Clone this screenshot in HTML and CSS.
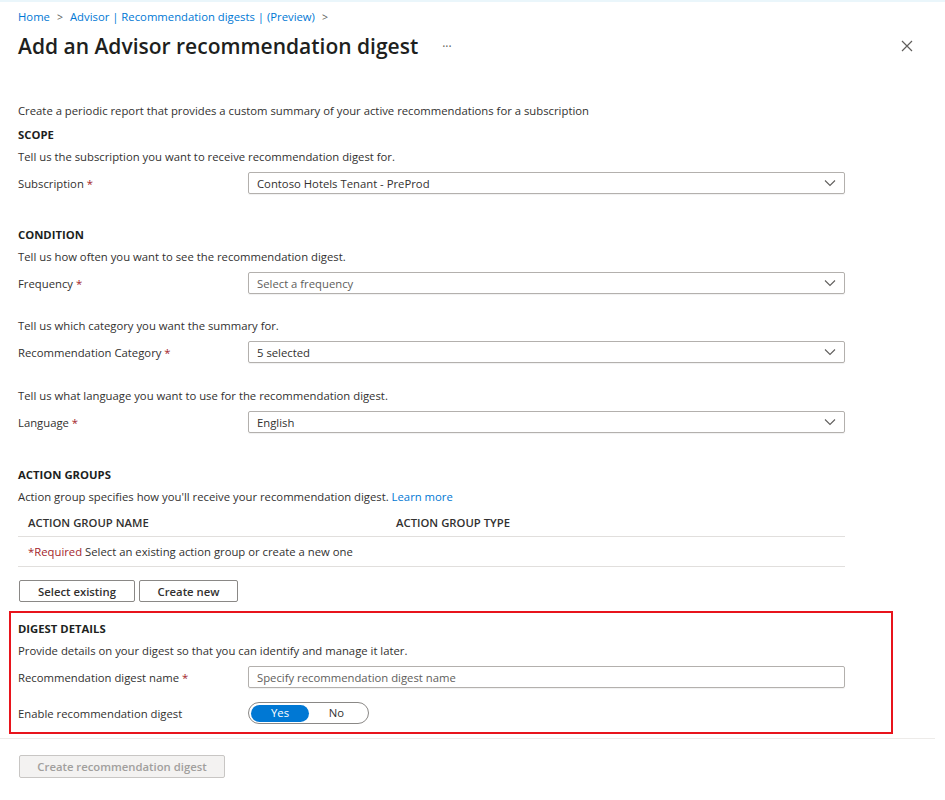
FILE: index.html
```html
<!DOCTYPE html>
<html lang="en">
<head>
<meta charset="utf-8">
<title>Add an Advisor recommendation digest</title>
<link rel="stylesheet" href="styles.css">
</head>
<body>
<div class="page">
  <nav class="breadcrumb">
    <a href="#">Home</a><span class="sep">&gt;</span><a href="#">Advisor | Recommendation digests | (Preview)</a><span class="sep">&gt;</span>
  </nav>
  <header class="titlebar">
    <h1 class="title">Add an Advisor recommendation digest</h1>
    <span class="more">···</span>
    <svg class="close" width="12" height="12" viewBox="0 0 12 12"><path d="M1 1L11 11M11 1L1 11" stroke="#605e5c" stroke-width="1.2" fill="none"/></svg>
  </header>

  <main class="form">
    <p class="text intro">Create a periodic report that provides a custom summary of your active recommendations for a subscription</p>

    <h2 class="heading">SCOPE</h2>
    <p class="text">Tell us the subscription you want to receive recommendation digest for.</p>
    <div class="row">
      <label class="label">Subscription <span class="req">*</span></label>
      <div class="select"><span class="value">Contoso Hotels Tenant - PreProd</span><svg class="chev" width="12" height="8" viewBox="0 0 12 8"><path d="M1 1.5L6 6.5L11 1.5" stroke="#605e5c" stroke-width="1.1" fill="none"/></svg></div>
    </div>

    <h2 class="heading section-gap">CONDITION</h2>
    <p class="text">Tell us how often you want to see the recommendation digest.</p>
    <div class="row">
      <label class="label">Frequency <span class="req">*</span></label>
      <div class="select"><span class="value placeholder">Select a frequency</span><svg class="chev" width="12" height="8" viewBox="0 0 12 8"><path d="M1 1.5L6 6.5L11 1.5" stroke="#605e5c" stroke-width="1.1" fill="none"/></svg></div>
    </div>

    <p class="text sub-gap">Tell us which category you want the summary for.</p>
    <div class="row">
      <label class="label">Recommendation Category <span class="req">*</span></label>
      <div class="select"><span class="value">5 selected</span><svg class="chev" width="12" height="8" viewBox="0 0 12 8"><path d="M1 1.5L6 6.5L11 1.5" stroke="#605e5c" stroke-width="1.1" fill="none"/></svg></div>
    </div>

    <p class="text sub-gap2">Tell us what language you want to use for the recommendation digest.</p>
    <div class="row">
      <label class="label">Language <span class="req">*</span></label>
      <div class="select"><span class="value">English</span><svg class="chev" width="12" height="8" viewBox="0 0 12 8"><path d="M1 1.5L6 6.5L11 1.5" stroke="#605e5c" stroke-width="1.1" fill="none"/></svg></div>
    </div>

    <h2 class="heading section-gap2">ACTION GROUPS</h2>
    <p class="text">Action group specifies how you'll receive your recommendation digest. <a class="link" href="#">Learn more</a></p>
    <div class="table">
      <div class="thead">
        <span class="col-name">ACTION GROUP NAME</span>
        <span class="col-type">ACTION GROUP TYPE</span>
      </div>
      <div class="trow"><span class="req-text">*Required</span>&nbsp;Select an existing action group or create a new one</div>
    </div>
    <div class="buttons">
      <button class="btn btn-select">Select existing</button>
      <button class="btn btn-new">Create new</button>
    </div>

    <section class="digest">
      <h2 class="heading">DIGEST DETAILS</h2>
      <p class="text">Provide details on your digest so that you can identify and manage it later.</p>
      <div class="row">
        <label class="label">Recommendation digest name <span class="req">*</span></label>
        <div class="input"><span class="value placeholder">Specify recommendation digest name</span></div>
      </div>
      <div class="row toggle-row">
        <label class="label">Enable recommendation digest</label>
        <div class="toggle"><span class="opt on">Yes</span><span class="opt">No</span></div>
      </div>
    </section>
  </main>

  <div class="divider"></div>
  <footer class="footer">
    <button class="btn-primary" disabled>Create recommendation digest</button>
  </footer>
</div>
</body>
</html>
```

FILE: styles.css
```css
* { box-sizing: border-box; }
html, body { margin: 0; padding: 0; background: #fff; }
body {
  font-family: "Open Sans", "Noto Sans", sans-serif;
  font-size: 11.3px;
  color: #323130;
}
.page { width: 945px; border-top: 2px solid #eaf6fb; }
.breadcrumb {
  margin: 5px 0 0 18px;
  line-height: 20px;
  font-size: 11.3px;
}
.breadcrumb a { color: #0078d4; text-decoration: none; }
.breadcrumb .sep { color: #605e5c; margin: 0 7px; font-size: 10.5px; }
.titlebar {
  display: flex;
  align-items: center;
  margin-top: 4px;
  height: 30px;
  padding-left: 18px;
}
.title {
  margin: 0;
  font-size: 21px;
  font-weight: 600;
  color: #201f1e;
  line-height: 30px;
}
.more { margin-left: 24px; color: #605e5c; font-size: 12px; }
.close { margin-left: auto; margin-right: 32px; }

.form { padding: 0 0 0 18px; width: 845px; }
.text { margin: 0; line-height: 22px; }
.intro { margin-top: 39px; }
.heading {
  margin: 2px 0 0;
  font-size: 11.3px;
  font-weight: 700;
  line-height: 22px;
  color: #201f1e;
}
.section-gap { margin-top: 30px; }
.section-gap2 { margin-top: 31px; }
.sub-gap { margin-top: 21px; }
.sub-gap2 { margin-top: 22px; }
.row {
  display: flex;
  align-items: center;
  height: 22px;
  margin-top: 4px;
}
.label { width: 230px; flex: none; }
.req { color: #a4262c; }
.select, .input {
  flex: 1;
  height: 22px;
  border: 1px solid #b3b0ad;
  border-radius: 2px;
  display: flex;
  align-items: center;
  padding: 0 7px 0 8px;
  box-shadow: 0 1px 1px rgba(0,0,0,0.06);
}
.value { flex: 1; white-space: nowrap; }
.placeholder { color: #605e5c; }
.chev { flex: none; margin-right: 1px; }

.link { color: #0078d4; text-decoration: none; }
.thead {
  display: flex;
  height: 29px;
  align-items: center;
  padding-left: 10px;
  border-bottom: 1px solid #e1dfdd;
  font-weight: 600;
  color: #323130;
}
.col-name { width: 368px; }
.trow {
  height: 30px;
  display: flex;
  align-items: center;
  padding-left: 10px;
  border-bottom: 1px solid #e1dfdd;
}
.req-text { color: #a4262c; }
.buttons { display: flex; gap: 4px; margin-top: 13px; padding-left: 1px; }
.btn {
  font-family: inherit;
  font-size: 11.3px;
  font-weight: 600;
  color: #323130;
  background: #fff;
  border: 1px solid #8a8886;
  border-radius: 2px;
  height: 22px;
  padding: 0;
}
.btn-select { width: 116px; }
.btn-new { width: 99px; }

.digest {
  margin: 9px -48px 0 -9px;
  border: 2px solid #e8141c;
  padding: 5px 46px 8px 7px;
}
.digest .heading { margin-top: 0; }
.row.toggle-row { margin-top: 14px; }
.toggle {
  width: 121px;
  height: 22px;
  border: 1px solid #8a8886;
  border-radius: 11px;
  display: flex;
  align-items: center;
  padding: 0 2px;
}
.opt { width: 58px; text-align: center; line-height: 16px; }
.opt.on {
  background: #0078d4;
  color: #fff;
  border-radius: 9px;
  height: 17px;
}
.opt:last-child { flex: 1; padding-right: 2px; }

.divider { height: 1px; background: #edebe9; margin-top: 4px; width: 935px; }
.footer { padding: 16px 0 0 19px; }
.btn-primary {
  font-family: inherit;
  font-size: 11.3px;
  font-weight: 600;
  color: #a19f9d;
  background: #f3f2f1;
  border: 1px solid #c8c6c4;
  border-radius: 2px;
  width: 206px;
  height: 23px;
  padding: 0;
}
```
